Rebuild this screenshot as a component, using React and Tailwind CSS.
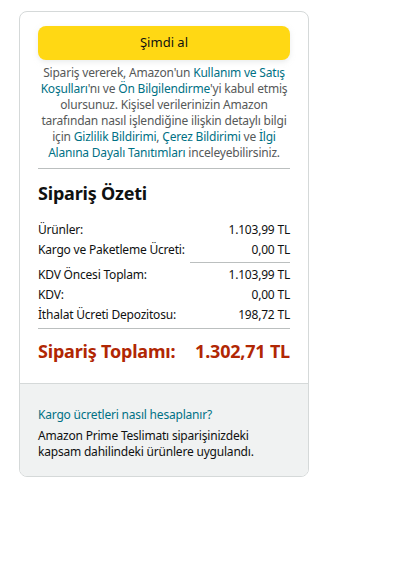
import React from 'react';

const Link = ({ children }) => <span className="text-[#007185]">{children}</span>;

const Row = ({ label, value }) => (
  <div className="flex justify-between h-5 items-center">
    <span>{label}</span>
    <span>{value}</span>
  </div>
);

export default function App() {
  return (
    <div className="min-h-screen bg-white pt-[11px] pl-[19px] text-[#0F1111]" style={{ fontFamily: '"Noto Sans", Arial, sans-serif' }}>
      <div className="w-[290px] border border-[#D5D9D9] rounded-lg overflow-hidden">
        <div className="px-[18px] pt-[14px] pb-[20px]">
          <button className="w-full h-[34px] rounded-lg bg-[#FFD814] text-[13px] text-[#0F1111] shadow-[0_2px_5px_rgba(213,217,217,0.5)]">
            Şimdi al
          </button>
          <p className="mt-[5px] text-center text-[12px] leading-4 text-[#565959] tracking-[-0.2px]">
            Sipariş vererek, Amazon'un <Link>Kullanım ve Satış</Link>
            <br />
            <Link>Koşulları</Link>'nı ve <Link>Ön Bilgilendirme</Link>'yi kabul etmiş
            <br />
            olursunuz. Kişisel verilerinizin Amazon
            <br />
            tarafından nasıl işlendiğine ilişkin detaylı bilgi
            <br />
            için <Link>Gizlilik Bildirimi</Link>, <Link>Çerez Bildirimi</Link> ve <Link>İlgi</Link>
            <br />
            <Link>Alanına Dayalı Tanıtımları</Link> inceleyebilirsiniz.
          </p>
          <div className="mt-[7px] border-t border-[#BBBFBF]" />
          <h2 className="mt-[12px] text-[18px] font-bold leading-6 tracking-[-0.2px]">Sipariş Özeti</h2>
          <div className="mt-[15px] text-[12px] tracking-[-0.2px]">
            <Row label="Ürünler:" value="1.103,99 TL" />
            <Row label="Kargo ve Paketleme Ücreti:" value="0,00 TL" />
            <div className="flex justify-end mt-[2px] mb-[2px]">
              <div className="w-[100px] border-t border-[#BBBFBF]" />
            </div>
            <Row label="KDV Öncesi Toplam:" value="1.103,99 TL" />
            <Row label="KDV:" value="0,00 TL" />
            <Row label="İthalat Ücreti Depozitosu:" value="198,72 TL" />
            <div className="mt-[3px] border-t border-[#BBBFBF]" />
            <div className="mt-[10px] flex justify-between text-[18px] font-bold text-[#B12704] leading-6">
              <span>Sipariş Toplamı:</span>
              <span>1.302,71 TL</span>
            </div>
          </div>
        </div>
        <div className="bg-[#F0F2F2] border-t border-[#D5D9D9] px-[18px] pt-[23px] pb-[16px] text-[12px] tracking-[-0.2px]">
          <div className="text-[#007185] leading-4">Kargo ücretleri nasıl hesaplanır?</div>
          <div className="mt-[5px] leading-4">
            Amazon Prime Teslimatı siparişinizdeki
            <br />
            kapsam dahilindeki ürünlere uygulandı.
          </div>
        </div>
      </div>
    </div>
  );
}
